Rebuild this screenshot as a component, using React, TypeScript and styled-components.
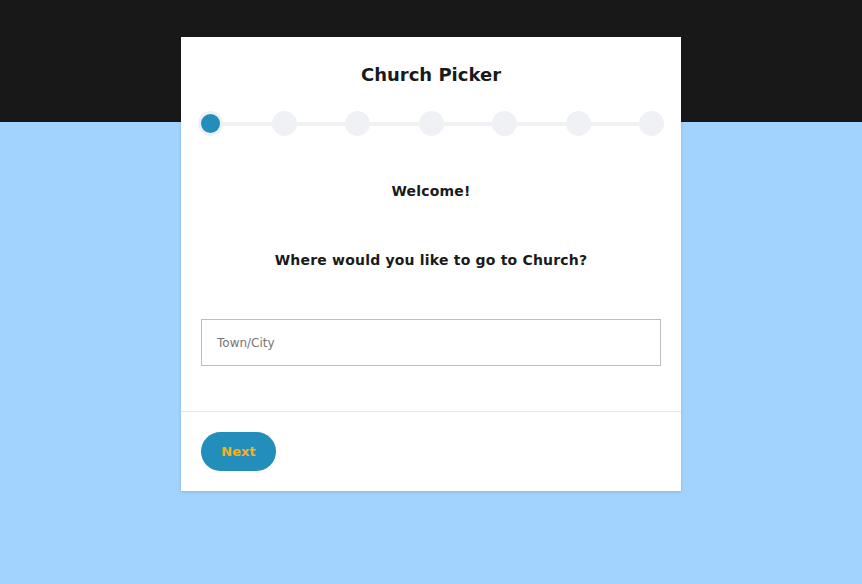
import { Fragment } from 'react';
import styled, { createGlobalStyle } from 'styled-components';

const GlobalStyle = createGlobalStyle`
    html, body {
        margin: 0;
        padding: 0;
    }
    body {
        font-family: "DejaVu Sans", Verdana, sans-serif;
        background: #a2d3fe;
    }
`;

const Page = styled.div`
    min-height: 584px;
    background: linear-gradient(to bottom, #181818 0, #181818 122px, #a2d3fe 122px);
    display: flex;
    justify-content: center;
    align-items: flex-start;
    padding-top: 37px;
    box-sizing: border-box;
`;

const Card = styled.div`
    width: 500px;
    background: #fff;
    box-shadow: 0 1px 3px rgba(0, 0, 0, 0.15);
    display: flex;
    flex-direction: column;
`;

const Header = styled.div`
    padding: 25px 17px 0;
`;

const Title = styled.h1`
    margin: 0;
    font-size: 18px;
    line-height: 26px;
    font-weight: bold;
    color: #1a1a1a;
    text-align: center;
`;

const Stepper = styled.div`
    display: flex;
    align-items: center;
    margin-top: 23px;
`;

const Step = styled.div<{ $active?: boolean }>`
    width: 25px;
    height: 25px;
    flex: none;
    border-radius: 50%;
    box-sizing: border-box;
    background: ${p => (p.$active ? '#238eb9' : '#f0f1f5')};
    border: ${p => (p.$active ? '3px solid #eef0f5' : 'none')};
`;

const Connector = styled.div`
    flex: 1;
    height: 4px;
    background: #f0f1f5;
`;

const Body = styled.div`
    padding: 46px 20px 45px;
    display: flex;
    flex-direction: column;
    align-items: center;
`;

const Heading = styled.h2<{ $gap?: number }>`
    margin: ${p => p.$gap ?? 0}px 0 0;
    font-size: 14px;
    line-height: 18px;
    font-weight: bold;
    letter-spacing: 0.2px;
    color: #1a1a1a;
    text-align: center;
`;

const Input = styled.input`
    margin-top: 50px;
    width: 100%;
    height: 47px;
    box-sizing: border-box;
    border: 1px solid #bdbdbd;
    padding: 0 15px;
    font-family: "DejaVu Sans", Verdana, sans-serif;
    font-size: 12px;
    color: #333;
    outline: none;

    &::placeholder {
        color: #757575;
    }
`;

const Footer = styled.div`
    border-top: 1px solid #e8e8e8;
    padding: 20px;
`;

const NextButton = styled.button`
    width: 75px;
    height: 39px;
    border: none;
    border-radius: 20px;
    background: #238eb9;
    color: #f5b120;
    font-family: "DejaVu Sans", Verdana, sans-serif;
    font-size: 13px;
    font-weight: bold;
    cursor: pointer;
`;

const steps = [0, 1, 2, 3, 4, 5, 6];

export default function App() {
    return (
        <>
            <GlobalStyle />
            <Page>
                <Card>
                    <Header>
                        <Title>Church Picker</Title>
                        <Stepper>
                            {steps.map(i => (
                                <Fragment key={i}>
                                    {i > 0 && <Connector />}
                                    <Step $active={i === 0} />
                                </Fragment>
                            ))}
                        </Stepper>
                    </Header>
                    <Body>
                        <Heading>Welcome!</Heading>
                        <Heading $gap={51}>Where would you like to go to Church?</Heading>
                        <Input placeholder="Town/City" />
                    </Body>
                    <Footer>
                        <NextButton>Next</NextButton>
                    </Footer>
                </Card>
            </Page>
        </>
    );
}
